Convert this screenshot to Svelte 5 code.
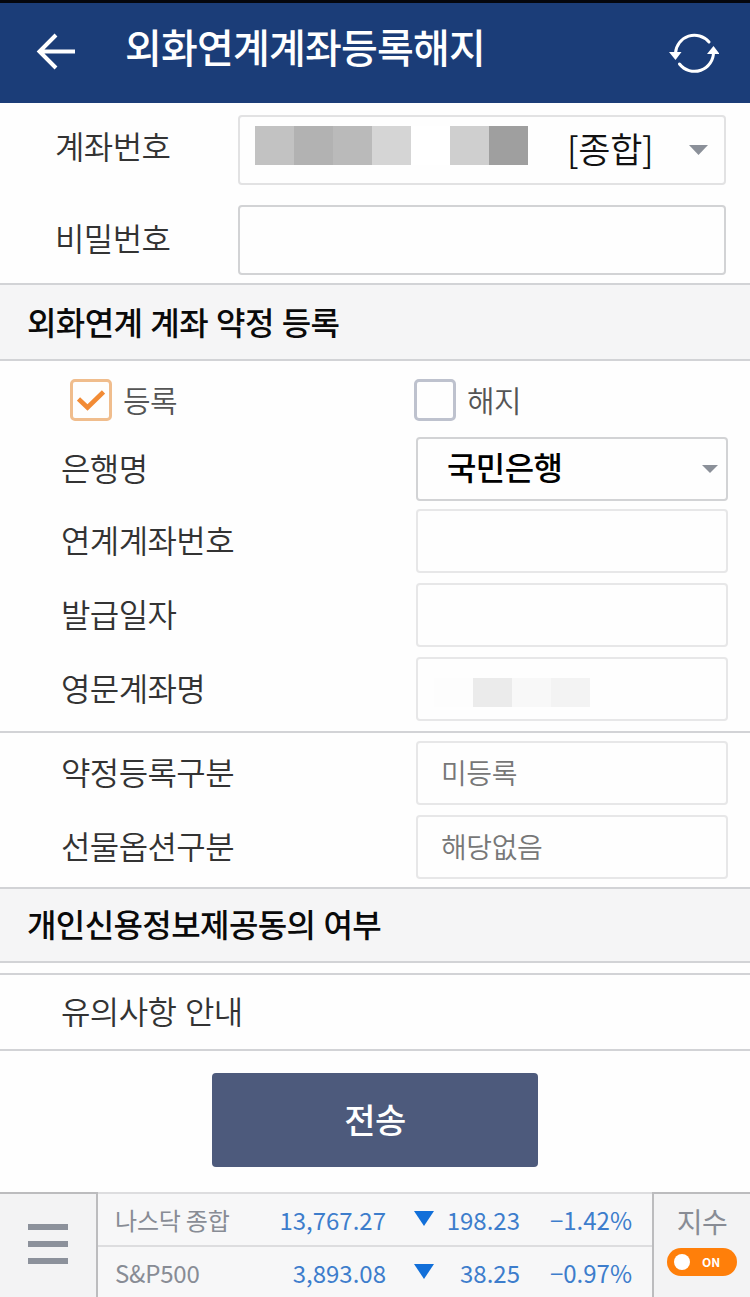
<script lang="ts">
interface Field {
	label: string;
	value?: string;
	masked?: boolean;
}

interface Quote {
	name: string;
	price: string;
	change: string;
	rate: string;
}

const accountMask = ["#c2c2c2", "#b2b2b2", "#bababa", "#d5d5d5", "#ffffff", "#cfcfcf", "#9f9f9f"];
const nameMask = ["#fdfdfd", "#ebebeb", "#f8f8f8", "#f3f3f3"];

const linkedFields: Field[] = [
	{ label: "연계계좌번호" },
	{ label: "발급일자" },
	{ label: "영문계좌명", masked: true },
];

const statusFields: Field[] = [
	{ label: "약정등록구분", value: "미등록" },
	{ label: "선물옵션구분", value: "해당없음" },
];

const quotes: Quote[] = [
	{ name: "나스닥 종합", price: "13,767.27", change: "198.23", rate: "−1.42%" },
	{ name: "S&P500", price: "3,893.08", change: "38.25", rate: "−0.97%" },
];

let mode = $state("register");
</script>

{#snippet fieldRow(field: Field)}
	<div class="row">
		<span class="label">{field.label}</span>
		<div class="box readonly">
			{#if field.masked}
				<div class="mask name-mask">
					{#each nameMask as color}
						<i style="background: {color}"></i>
					{/each}
				</div>
			{:else}
				{field.value ?? ""}
			{/if}
		</div>
	</div>
{/snippet}

<div class="screen">
	<header class="header">
		<button class="icon-button" type="button" aria-label="뒤로">
			<svg width="40" height="40" viewBox="0 0 40 40" fill="none" stroke="#fff" stroke-width="4">
				<path d="M39 19.500H4M20 3L3.500 19.500L20 36" />
			</svg>
		</button>
		<h1 class="title">외화연계계좌등록해지</h1>
		<button class="icon-button refresh" type="button" aria-label="새로고침">
			<svg width="50" height="42" viewBox="0 0 50 42" fill="none" stroke="#fff" stroke-width="3" stroke-linecap="round">
				<path d="M6.500 21A19 19 0 0 1 40 10" />
				<path d="M10.500 32A19 19 0 0 0 44.500 20" />
				<path d="M0 20H12.500L6.500 28ZM38 22H50.500L44.500 14Z" fill="#fff" stroke="none" />
			</svg>
		</button>
	</header>

	<section class="account">
		<div class="account-row">
			<span class="label first">계좌번호</span>
			<div class="box account-box light">
				<div class="mask account-mask">
					{#each accountMask as color}
						<i style="background: {color}"></i>
					{/each}
				</div>
				<span class="account-type">[종합]</span>
				<svg class="caret" width="19" height="10" viewBox="0 0 19 10"><path d="M0 0H19L9.500 10Z" fill="#8b9099" /></svg>
			</div>
		</div>
		<div class="account-row">
			<span class="label">비밀번호</span>
			<div class="box account-box"></div>
		</div>
	</section>

	<h2 class="section-title">외화연계 계좌 약정 등록</h2>

	<section class="form">
		<div class="choices">
			<button class="choice" type="button" onclick={() => (mode = "register")}>
				<span class="check" class:checked={mode === "register"}>
					{#if mode === "register"}
						<svg width="28" height="21" viewBox="0 0 28 21" fill="none" stroke="#f28b35" stroke-width="4.600">
							<path d="M1.500 9L10.500 17.500L26.500 2" />
						</svg>
					{/if}
				</span>
				<span class="choice-text">등록</span>
			</button>
			<button class="choice" type="button" onclick={() => (mode = "cancel")}>
				<span class="check" class:checked={mode === "cancel"}></span>
				<span class="choice-text">해지</span>
			</button>
		</div>
		<div class="row bank">
			<span class="label">은행명</span>
			<div class="box select">
				<span class="bank-name">국민은행</span>
				<svg width="16" height="8" viewBox="0 0 16 8"><path d="M0 0H16L8 8Z" fill="#8b9099" /></svg>
			</div>
		</div>
		{#each linkedFields as field}
			{@render fieldRow(field)}
		{/each}
	</section>

	<section class="form status">
		{#each statusFields as field}
			{@render fieldRow(field)}
		{/each}
	</section>

	<h2 class="section-title consent">개인신용정보제공동의 여부</h2>

	<div class="notice">유의사항 안내</div>

	<div class="submit-area">
		<button class="submit" type="button">전송</button>
	</div>

	<footer class="footer">
		<button class="menu" type="button" aria-label="메뉴">
			<i></i>
			<i></i>
			<i></i>
		</button>
		<div class="quotes">
			{#each quotes as quote}
				<div class="quote">
					<span class="quote-name">{quote.name}</span>
					<span class="price">{quote.price}</span>
					<svg width="20" height="15" viewBox="0 0 20 15"><path d="M0 0H20L10 15Z" fill="#126fd9" /></svg>
					<span class="change">{quote.change}</span>
					<span class="rate">{quote.rate}</span>
				</div>
			{/each}
		</div>
		<div class="index">
			<span class="index-label">지수</span>
			<div class="toggle">
				<i></i>
				<span>ON</span>
			</div>
		</div>
	</footer>
</div>

<style>
	:global(body) {
		background: #fefefe;
	}

	.screen,
	.screen * {
		box-sizing: border-box;
	}

	.screen {
		display: flex;
		flex-direction: column;
		width: 750px;
		height: 1297px;
		overflow: hidden;
		background: #fefefe;
		color: #333;
		font-family: "Noto Sans CJK KR", sans-serif;
		font-size: 32px;
		font-weight: 350;
		letter-spacing: -0.6px;
		white-space: nowrap;
	}

	button {
		padding: 0;
		border: 0;
		background: none;
		color: inherit;
		font: inherit;
		letter-spacing: inherit;
	}

	svg {
		display: block;
		flex: none;
	}

	.header {
		display: flex;
		align-items: center;
		height: 103px;
		padding: 0 31px 0 36px;
		border-top: 3px solid #05070d;
		background: #1b3d78;
		color: #fff;
	}

	.icon-button {
		margin-bottom: 2px;
	}

	.icon-button.refresh {
		margin-bottom: 0;
	}

	.title {
		flex: 1;
		margin: 0 0 14px 49px;
		font-size: 40px;
		font-weight: 500;
		line-height: 60px;
		letter-spacing: -0.8px;
	}

	.account {
		display: flex;
		flex-direction: column;
		gap: 20px;
		padding: 12px 24px 8px 55px;
	}

	.account-row {
		display: grid;
		grid-template-columns: 183px 488px;
		align-items: center;
	}

	.box {
		display: flex;
		align-items: center;
		height: 64px;
		border: 2px solid #d2d3d5;
		border-radius: 4px;
		background: #fefefe;
	}

	.account-box {
		height: 70px;
	}

	.box.light {
		border-color: #e2e2e3;
	}

	.label {
		padding-bottom: 4px;
	}

	.account .label {
		padding-bottom: 7px;
	}

	.account .label.first {
		padding-bottom: 11px;
	}

	.mask {
		display: flex;
	}

	.mask i {
		width: 39px;
	}

	.account-mask {
		height: 39px;
		margin: 0 39px 9px 15px;
	}

	.account-type {
		flex: 1;
		padding-bottom: 5px;
		color: #111;
		font-size: 35px;
		letter-spacing: -0.3px;
	}

	.caret {
		margin-right: 16px;
	}

	.section-title {
		height: 78px;
		margin: 0;
		padding-left: 27px;
		border-top: 2px solid #d2d3d6;
		border-bottom: 2px solid #d2d3d6;
		background: #f5f5f6;
		color: #0a0a0a;
		font-size: 32px;
		font-weight: 500;
		line-height: 73px;
		word-spacing: 1.4px;
	}

	.form {
		display: flex;
		flex-direction: column;
		gap: 10px;
		padding: 18px 22px 10px 61px;
	}

	.choices {
		display: grid;
		grid-template-columns: 344px 1fr;
		padding-left: 9px;
		margin-bottom: 6px;
		margin-right: -10px;
	}

	.choice {
		display: flex;
		align-items: center;
		gap: 11px;
		height: 42px;
		color: #555;
		font-size: 30px;
	}

	.choice-text {
		padding-bottom: 3px;
	}

	.check {
		display: flex;
		align-items: center;
		justify-content: center;
		width: 42px;
		height: 42px;
		border: 3px solid #bec2ce;
		border-radius: 5px;
	}

	.check.checked {
		border-color: #f0bd8d;
	}

	.row {
		display: grid;
		grid-template-columns: 355px 312px;
		align-items: center;
	}

	.bank {
		margin-bottom: -2px;
	}

	.select {
		justify-content: space-between;
		padding: 0 8px 0 29px;
		color: #000;
		font-weight: 500;
	}

	.bank-name {
		padding-bottom: 6px;
	}

	.readonly {
		padding: 0 0 3px 23px;
		border-color: #e7e7e8;
		color: #777;
		font-size: 28px;
		letter-spacing: -0.4px;
	}

	.name-mask {
		height: 29px;
		margin: 9px 0 0 -7px;
	}

	.status {
		padding-top: 8px;
		padding-bottom: 8px;
		border-top: 2px solid #d2d3d6;
	}

	.consent {
		height: 76px;
		line-height: 69px;
	}

	.notice {
		height: 78px;
		margin-top: 10px;
		padding-left: 61px;
		border-top: 2px solid #d2d3d6;
		border-bottom: 2px solid #d2d3d6;
		line-height: 71px;
		word-spacing: 2px;
	}

	.submit-area {
		display: flex;
		justify-content: center;
		padding: 22px 0 25px;
	}

	.submit {
		width: 326px;
		height: 94px;
		padding-bottom: 3px;
		border-radius: 4px;
		background: #4d5a7c;
		color: #fff;
		font-size: 34px;
		font-weight: 500;
	}

	.footer {
		display: grid;
		grid-template-columns: 98px 554px 98px;
		height: 105px;
		background: #f3f3f4;
		color: #888c95;
		font-weight: 400;
	}

	.menu {
		display: flex;
		flex-direction: column;
		align-items: center;
		gap: 11px;
		padding-top: 30px;
		border-top: 2px solid #bcbcbe;
		border-right: 2px solid #bcbcbe;
	}

	.menu i {
		width: 40px;
		height: 6px;
		background: #8c919b;
	}

	.quotes {
		border-top: 2px solid #dddddf;
		background: #f7f7f8;
	}

	.quote {
		display: grid;
		grid-template-columns: 116px 155px 48px 86px 112px;
		align-items: center;
		height: 53px;
		padding-left: 17px;
		border-bottom: 2px solid #dddddf;
		color: #3d7dcc;
		font-size: 24px;
		letter-spacing: 0;
	}

	.quote svg {
		margin: 0 0 3px 28px;
	}

	.quote-name {
		color: #888c95;
		letter-spacing: -0.2px;
	}

	.price,
	.change,
	.rate {
		text-align: right;
	}

	.index {
		display: flex;
		flex-direction: column;
		align-items: center;
		border-top: 2px solid #bcbcbe;
		border-left: 2px solid #bcbcbe;
	}

	.index-label {
		height: 54px;
		font-size: 28px;
		line-height: 55px;
	}

	.toggle {
		display: flex;
		align-items: center;
		gap: 12px;
		width: 70px;
		height: 28px;
		padding-left: 7px;
		border-radius: 14px;
		background: #ff7f0a;
		color: #fff;
		font-size: 12px;
		font-weight: 700;
		letter-spacing: 0;
	}

	.toggle span {
		padding-bottom: 2px;
	}

	.toggle i {
		width: 16px;
		height: 16px;
		border-radius: 50%;
		background: #fff;
	}
</style>
